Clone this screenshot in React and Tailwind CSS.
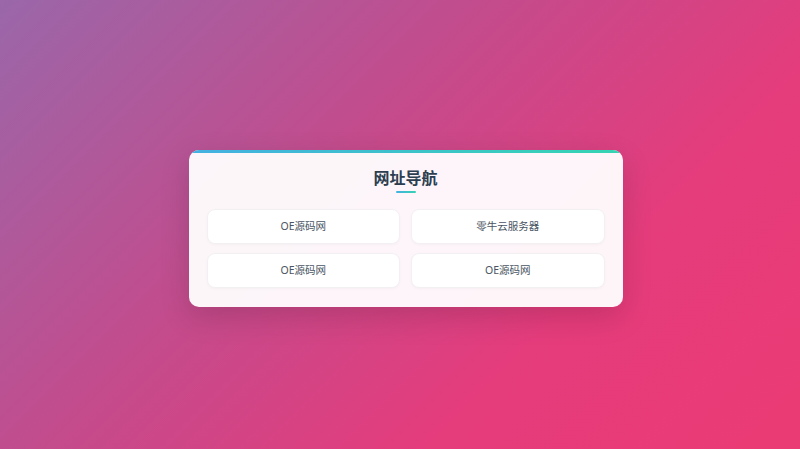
import React from 'react';

const links = [
  { name: 'OE源码网', url: '#' },
  { name: '零牛云服务器', url: '#' },
  { name: 'OE源码网', url: '#' },
  { name: 'OE源码网', url: '#' },
];

const App = () => {
  return (
    <div
      className="w-full h-[449px] flex items-center justify-center bg-[linear-gradient(135deg,#9a67a9_0%,#c44b8c_40%,#e53c7c_70%,#eb3b74_100%)]"
      style={{ fontFamily: '"Noto Sans", "Noto Sans CJK SC", sans-serif' }}
    >
      <div className="relative w-[434px] ml-[11px] mt-[8px] bg-white/95 rounded-[10px] shadow-[0_10px_30px_rgba(0,0,0,0.15)] overflow-hidden px-[18px] pt-[18px] pb-[19px]">
        {/* top accent line */}
        <div className="absolute left-0 right-0 top-0 h-[3px] bg-[linear-gradient(90deg,#45b0e2,#35d4b2)]" />

        <h2 className="text-center text-[16px] leading-5 font-bold text-[#2c3e50]">网址导航</h2>
        <div className="mx-auto mt-[3px] w-5 h-[2px] rounded bg-[linear-gradient(90deg,#45b0e2,#35d4b2)] mb-[16px]" />

        <div className="grid grid-cols-2 gap-x-[11px] gap-y-[9px]">
          {links.map((link, i) => (
            <a
              key={i}
              href={link.url}
              className="h-[35px] flex items-center justify-center bg-white rounded-lg border border-[#f3f0f4] shadow-[0_1px_3px_rgba(0,0,0,0.03)] text-[10.5px] text-[#4a5563]"
            >
              {link.name}
            </a>
          ))}
        </div>
      </div>
    </div>
  );
};

export default App;
